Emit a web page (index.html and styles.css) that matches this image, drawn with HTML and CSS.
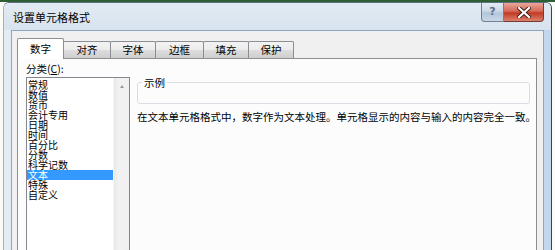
FILE: index.html
```html
<!DOCTYPE html>
<html lang="zh-CN">
<head>
<meta charset="utf-8">
<title>设置单元格格式</title>
<link rel="stylesheet" href="styles.css">
</head>
<body>
<div class="topline"></div>
<div class="window">
  <div class="titlebar">
    <span class="title">设置单元格格式</span>
    <div class="caption-buttons">
      <div class="btn-help">?</div>
      <div class="btn-close">
        <svg width="14" height="11" viewBox="0 0 14 11"><path d="M2 1 L12 10 M12 1 L2 10" stroke="#3a1a14" stroke-width="4" stroke-linecap="square"/><path d="M2 1 L12 10 M12 1 L2 10" stroke="#ffffff" stroke-width="2.2" stroke-linecap="square"/></svg>
      </div>
    </div>
  </div>
  <div class="client">
    <div class="tabs">
      <div class="tab active">数字</div>
      <div class="tab">对齐</div>
      <div class="tab w46">字体</div>
      <div class="tab w49">边框</div>
      <div class="tab w46">填充</div>
      <div class="tab w46">保护</div>
    </div>
    <div class="panel">
      <div class="left-col">
        <div class="label">分类(<span class="u">C</span>):</div>
        <div class="listbox">
          <ul class="items">
            <li>常规</li>
            <li>数值</li>
            <li>货币</li>
            <li>会计专用</li>
            <li>日期</li>
            <li>时间</li>
            <li>百分比</li>
            <li>分数</li>
            <li>科学记数</li>
            <li class="selected">文本</li>
            <li>特殊</li>
            <li>自定义</li>
          </ul>
          <div class="scrollbar"><span class="arrow-up"></span></div>
        </div>
      </div>
      <div class="right-col">
        <div class="groupbox"><span class="legend">示例</span></div>
        <p class="desc">在文本单元格格式中，数字作为文本处理。单元格显示的内容与输入的内容完全一致。</p>
      </div>
    </div>
  </div>
</div>
</body>
</html>
```

FILE: styles.css
```css
* { box-sizing: border-box; }
html, body { margin: 0; padding: 0; }
body {
  width: 555px;
  height: 250px;
  overflow: hidden;
  background: #fbfcf6;
  font-family: "Noto Sans CJK SC", "Noto Sans", sans-serif;
  font-size: 10.5px;
  color: #000;
}
.topline {
  height: 2px;
  background: #2e5e34;
}
.window {
  margin-left: 3px;
  width: 549px;
  height: 252px;
  border: 1px solid #5d7183;
  border-left-color: #9fb2c4;
  border-right-color: #2f4656;
  border-radius: 6px 6px 0 0;
  background: linear-gradient(to right, #e6eef4 0, #d9e4ef 3%, #cfdeee 60%, #c2d6ec 100%);
  display: flex;
  flex-direction: column;
}
.titlebar {
  height: 27px;
  display: flex;
  justify-content: space-between;
  align-items: flex-start;
  background: linear-gradient(to bottom, #e2eaf2, #d8e3ee);
  border-radius: 5px 5px 0 0;
}
.title {
  padding-left: 9px;
  margin-top: 7px;
  line-height: 14px;
  font-size: 11px;
}
.caption-buttons {
  display: flex;
  margin-right: 7px;
  height: 19px;
}
.btn-help {
  width: 23px;
  height: 19px;
  border: 1px solid #6f8193;
  border-top: none;
  border-radius: 0 0 0 4px;
  background: linear-gradient(to bottom, #e4ecf4 0, #cbd8e6 45%, #b3c5d9 55%, #c9d8e8 100%);
  color: #5b6f86;
  font-family: "DejaVu Sans", sans-serif;
  font-weight: bold;
  font-size: 11px;
  line-height: 17px;
  text-align: center;
}
.btn-close {
  width: 40px;
  height: 19px;
  border: 1px solid #7a3a30;
  border-left: none;
  border-top: none;
  border-radius: 0 0 4px 0;
  background: linear-gradient(to bottom, #e9a79a 0, #d46a57 45%, #c23a24 55%, #d9826f 100%);
  display: flex;
  align-items: center;
  justify-content: center;
}
.client {
  flex: 1;
  margin: 0 7px 0 7px;
  background: #f0f0f0;
  border: 1px solid #8ea6bf;
  border-bottom: none;
  padding: 0 6px 0 5px;
  display: flex;
  flex-direction: column;
}
.tabs {
  display: flex;
  align-items: flex-end;
  height: 27px;
  padding-top: 7px;
}
.tab {
  width: 48px;
  height: 17px;
  margin-left: -1px;
  border: 1px solid #8c8e94;
  border-bottom: none;
  border-radius: 2px 2px 0 0;
  background: linear-gradient(to bottom, #f3f3f3 0, #ebebeb 50%, #dddddd 51%, #cfcfcf 100%);
  text-align: center;
  line-height: 15px;
  font-size: 10.5px;
}
.tab.w46 { width: 46px; }
.tab.w49 { width: 49px; }
.tab.active {
  width: 47px;
  margin-left: 0;
  height: 21px;
  margin-bottom: -1px;
  background: #ffffff;
  line-height: 19px;
  position: relative;
  z-index: 1;
}
.panel {
  flex: 1;
  border: 1px solid #8c8e94;
  border-bottom: none;
  background: #fcfcfc;
  display: flex;
  gap: 7px;
  padding: 4px 5px 0 8px;
}
.left-col {
  flex: 0 0 104px;
  width: 104px;
  display: flex;
  flex-direction: column;
}
.label {
  height: 14px;
  line-height: 12px;
}
.u { text-decoration: underline; }
.listbox {
  flex: 1;
  border: 1px solid #828790;
  border-bottom: none;
  background: #fff;
  display: flex;
}
.items {
  list-style: none;
  margin: 0;
  padding: 2px 0 0 0;
  flex: 1;
  font-size: 10px;
}
.items li {
  height: 10px;
  line-height: 10px;
  padding-left: 1px;
  white-space: nowrap;
}
.items li.selected {
  background: #3399ff;
  color: #fff;
}
.scrollbar {
  flex: 0 0 16px;
  background: linear-gradient(to right, #e8e8e8, #f2f2f2 30%, #f0f0f0);
  border-left: 1px solid #f6f6f6;
  display: flex;
  justify-content: center;
  padding-top: 7px;
}
.arrow-up {
  width: 0;
  height: 0;
  border-left: 2.5px solid transparent;
  border-right: 2.5px solid transparent;
  border-bottom: 3px solid #9a9a9a;
}
.right-col {
  flex: 1;
  min-width: 0;
  padding-top: 19px;
  padding-right: 1px;
}
.groupbox {
  height: 22px;
  border: 1px solid #d8dee3;
  border-radius: 3px;
  padding-left: 4px;
}
.legend {
  position: relative;
  top: -8px;
  background: #fcfcfc;
  padding: 0 2px;
  line-height: 14px;
}
.desc {
  margin: 7px 0 0 0;
  line-height: 12px;
  white-space: nowrap;
}
```
